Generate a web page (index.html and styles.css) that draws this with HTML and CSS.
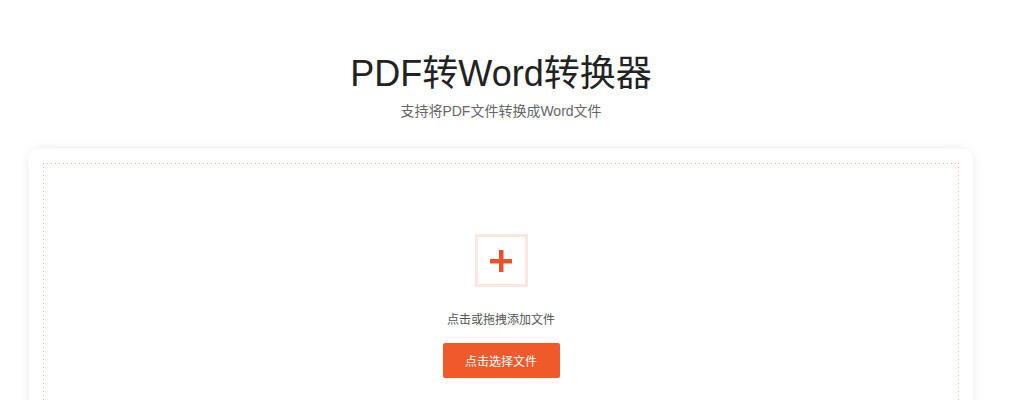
FILE: index.html
```html
<!DOCTYPE html>
<html lang="zh-CN">
<head>
  <meta charset="UTF-8">
  <title>PDF转Word转换器</title>
  <link rel="stylesheet" href="styles.css">
</head>
<body>
  <div class="page">
    <div class="header">
      <h1 class="title">PDF转Word转换器</h1>
      <p class="subtitle">支持将PDF文件转换成Word文件</p>
    </div>
    <div class="card">
      <div class="dropzone">
        <div class="add-icon">
          <svg width="22" height="22" viewBox="0 0 22 22">
            <rect x="9" y="0" width="4.5" height="22" fill="#e8532b"/>
            <rect x="0" y="9" width="22" height="4.5" fill="#e8532b"/>
          </svg>
        </div>
        <p class="hint">点击或拖拽添加文件</p>
        <button class="pick-btn">点击选择文件</button>
      </div>
    </div>
  </div>
</body>
</html>
```

FILE: styles.css
```css
html, body {
  margin: 0;
  padding: 0;
  background: #fff;
  font-family: "Liberation Sans", Arial, "Noto Sans CJK SC", sans-serif;
}
.page {
  width: 944px;
  margin-left: 29px;
}
.header {
  text-align: center;
  padding-top: 50px;
}
.title {
  margin: 0;
  font-size: 36px;
  font-weight: normal;
  line-height: 48px;
  color: #222;
}
.subtitle {
  margin: 3px 0 0;
  font-size: 14px;
  line-height: 20px;
  color: #666;
}
.card {
  margin-top: 28px;
  background: #fff;
  border-radius: 10px;
  box-shadow: 0 0 12px rgba(0, 0, 0, 0.08);
  padding: 14px;
}
/* sparse dotted edge: 1px dot every 4px */
.dropzone {
  height: 320px;
  display: flex;
  flex-direction: column;
  align-items: center;
  padding-top: 71px;
  box-sizing: border-box;
  background-image:
    repeating-linear-gradient(90deg, #f5b091 0 1px, transparent 1px 4px),
    repeating-linear-gradient(90deg, #f5b091 0 1px, transparent 1px 4px),
    repeating-linear-gradient(180deg, #f5b091 0 1px, transparent 1px 4px),
    repeating-linear-gradient(180deg, #f5b091 0 1px, transparent 1px 4px);
  background-size: 100% 1px, 100% 1px, 1px 100%, 1px 100%;
  background-position: 0 0, 0 100%, 0 0, 100% 0;
  background-repeat: no-repeat;
}
.add-icon {
  width: 53px;
  height: 53px;
  box-sizing: border-box;
  border: 3px solid #fde6dc;
  display: flex;
  align-items: center;
  justify-content: center;
}
.hint {
  margin: 24px 0 0;
  font-size: 12px;
  line-height: 18px;
  color: #555;
}
.pick-btn {
  margin-top: 14px;
  width: 117px;
  height: 35px;
  border: none;
  border-radius: 2px;
  background: #f05a2b;
  color: #fff;
  font-family: inherit;
  font-size: 12px;
}
```
